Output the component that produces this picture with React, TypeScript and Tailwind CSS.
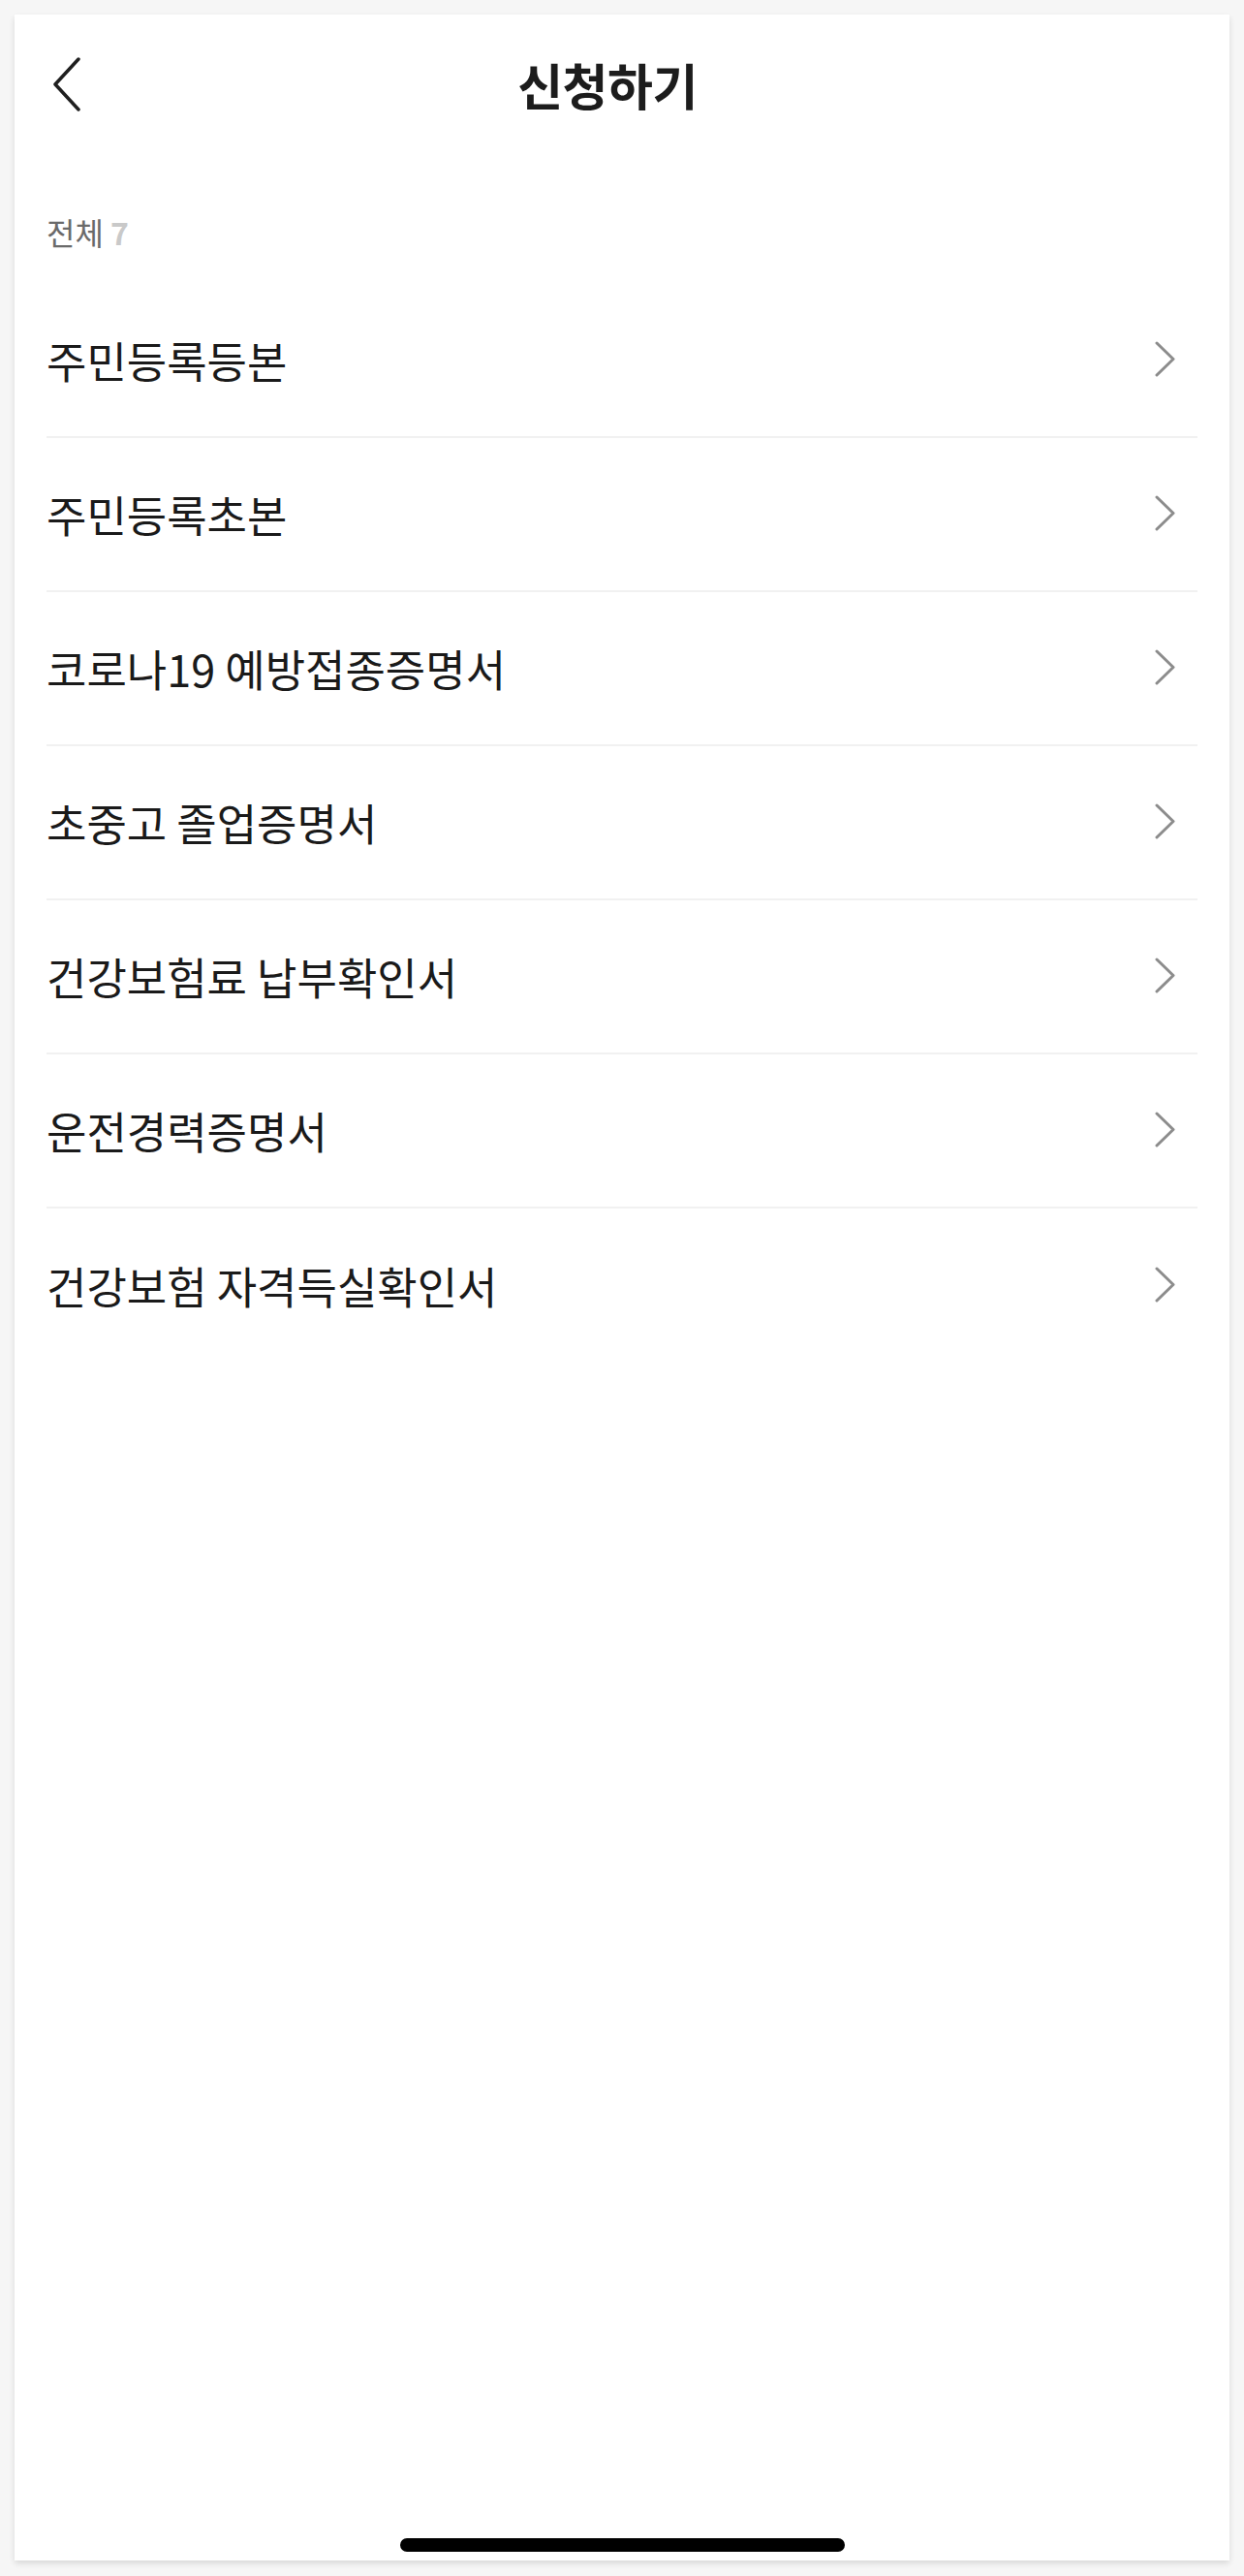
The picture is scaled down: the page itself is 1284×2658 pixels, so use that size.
import React from "react";

const items = [
  "주민등록등본",
  "주민등록초본",
  "코로나19 예방접종증명서",
  "초중고 졸업증명서",
  "건강보험료 납부확인서",
  "운전경력증명서",
  "건강보험 자격득실확인서",
];

const BackIcon = () => (
  <svg width="30" height="56" viewBox="0 0 30 56" fill="none">
    <path d="M27 2 L3 28 L27 54" stroke="#1f1f1f" strokeWidth="3.5" strokeLinecap="round" strokeLinejoin="round" />
  </svg>
);

const ChevronRight = () => (
  <svg width="22" height="37" viewBox="0 0 22 37" fill="none">
    <path d="M2 2 L19 18.5 L2 35" stroke="#8c8c8c" strokeWidth="3" strokeLinecap="round" strokeLinejoin="round" />
  </svg>
);

const App = () => {
  return (
    <div
      className="w-[1284px] h-[2658px] bg-[#f6f6f6] pt-[15px] pl-[15px]"
      style={{ fontFamily: '"Noto Sans CJK KR", "Noto Sans", sans-serif' }}
    >
      <div className="w-[1254px] h-[2627px] bg-white shadow-[0_3px_6px_rgba(0,0,0,0.12)] flex flex-col">
        <div className="h-[144px] flex items-center relative">
          <div className="absolute left-[39px] top-[44px]">
            <BackIcon />
          </div>
          <h1 className="w-full text-center text-[51px] font-bold text-[#1c1c1c] pr-[30px] tracking-[-0.5px]">
            신청하기
          </h1>
        </div>

        <div className="px-[33px]">
          <div className="pt-[60px] h-[134px] text-[32px] leading-[40px] flex items-start gap-[7px]">
            <span className="text-[#6a6a6a]">전체</span>
            <span className="text-[#c9c9c9] font-bold">7</span>
          </div>

          <ul>
            {items.map((item, i) => (
              <li
                key={item}
                className={
                  i < items.length - 1
                    ? "h-[159px] flex items-center justify-between border-b-[2px] border-[#f1f1f1]"
                    : "h-[159px] flex items-center justify-between"
                }
              >
                <span className="text-[45px] text-[#1a1a1a]">{item}</span>
                <span className="mr-[22px] mt-[-2px]">
                  <ChevronRight />
                </span>
              </li>
            ))}
          </ul>
        </div>

        <div className="flex-1" />
        <div className="flex justify-center mb-[9px]">
          <div className="w-[459px] h-[14px] rounded-full bg-black" />
        </div>
      </div>
    </div>
  );
};

export default App;
